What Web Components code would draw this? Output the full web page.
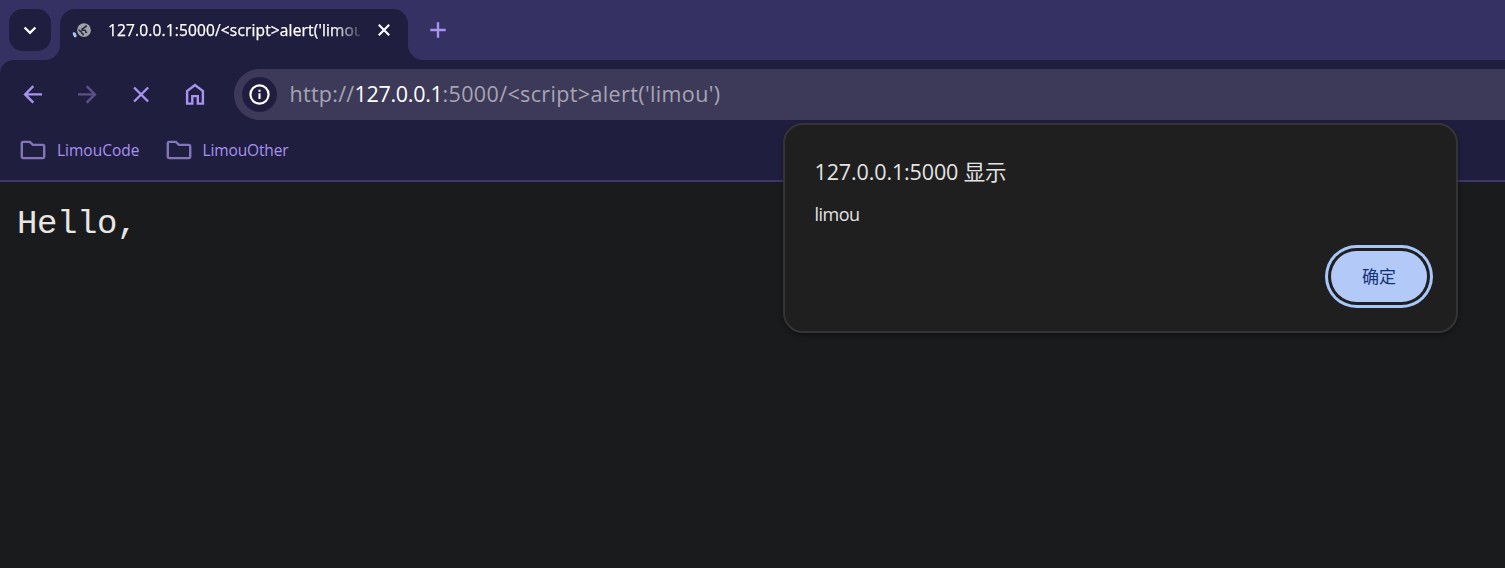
<!DOCTYPE html>
<html lang="zh-CN">
<head>
<meta charset="utf-8">
<title>127.0.0.1:5000</title>
<style>
html,body{margin:0;height:100%;overflow:hidden;background:#1a1b1d}
body{font-family:"Open Sans","Noto Sans CJK SC",sans-serif}
</style>
</head>
<body>
<browser-window>
  <tab-strip slot="tabs"><fit-text w="264">127.0.0.1:5000/&lt;script&gt;alert('limou')</fit-text></tab-strip>
  <nav-bar slot="nav"></nav-bar>
  <bookmarks-bar slot="marks">
    <bookmark-item><fit-text w="82.5">LimouCode</fit-text></bookmark-item>
    <bookmark-item><fit-text w="86">LimouOther</fit-text></bookmark-item>
  </bookmarks-bar>
  <page-view><fit-text w="120">Hello,</fit-text></page-view>
  <alert-dialog slot="dialog">
    <fit-text slot="title" w="192">127.0.0.1:5000 显示</fit-text>
    <fit-text slot="message" w="45">limou</fit-text>
    <fit-text slot="action" w="34">确定</fit-text>
  </alert-dialog>
</browser-window>
<script>
function define(name, html) {
  customElements.define(name, class extends HTMLElement {
    constructor() {
      super();
      this.attachShadow({mode: 'open'}).innerHTML = html;
    }
  });
}

define('browser-window', `<style>
:host{display:flex;flex-direction:column;height:100vh;position:relative;background:#353163;overflow:hidden}
.toolbar{background:#201e3f;border-radius:14px 0 0 0;height:120px;border-bottom:2px solid #3f3867}
</style>
<slot name="tabs"></slot>
<div class="toolbar"><slot name="nav"></slot><slot name="marks"></slot></div>
<slot></slot><slot name="dialog"></slot>`);

define('tab-strip', `<style>
:host{display:flex;height:60px;box-sizing:border-box;padding:9px 0 0 9px;align-items:flex-start;flex:none}
.search{width:42px;height:42px;border-radius:14px;background:#201e3f;display:grid;place-items:center}
.tab{position:relative;margin-left:9px;width:348px;height:51px;box-sizing:border-box;border-radius:15px 15px 0 0;background:#201e3f;display:flex;padding-left:12px}
.tab::before,.tab::after{content:"";position:absolute;bottom:0;width:15px;height:15px}
.tab::before{left:-15px;background:radial-gradient(circle at 0 0,transparent 14.5px,#201e3f 15.3px)}
.tab::after{right:-15px;background:radial-gradient(circle at 100% 0,transparent 14.5px,#201e3f 15.3px)}
.label{margin-left:16px;width:252px;height:42px;overflow:hidden;font-size:15.5px;font-weight:500;line-height:42px;color:#fff;-webkit-text-stroke:.25px #fff;-webkit-mask-image:linear-gradient(90deg,#000 224px,transparent 258px)}
svg{display:block;flex:none}
.fav{margin-top:11px}.close{margin:14px 0 0 17px}
.plus{margin:13px 0 0 22px}
</style>
<div class="search"><svg width="14" height="9" viewBox="0 0 14 9"><path d="M1.6 1.5 7 6.8l5.4-5.3" fill="none" stroke="#fff" stroke-width="2.3"/></svg></div>
<div class="tab">
<svg class="fav" width="20" height="20" viewBox="0 0 20 20"><path d="M2.2 13.7 3.2 15.8" stroke="#a8c7fa" stroke-width="3" stroke-linecap="round" fill="none"/><circle cx="12" cy="10.2" r="6.9" fill="#a0a2ab"/><path d="M14.2 5.2Q14.3 7.1 12.4 7.3 12 8.7 10.3 8.8L10.1 10.2H13Q13.8 10.4 13.8 12.2L15.2 12.4M6.7 9.7 9.4 12.2Q9.7 13.8 11.1 13.9V15.6" fill="none" stroke="#29273f" stroke-width="1.5"/></svg>
<div class="label"><slot></slot></div>
<svg class="close" width="14" height="14" viewBox="0 0 14 14"><path d="m1.8 1.8 10.4 10.4m0-10.4L1.8 12.2" stroke="#fff" stroke-width="2.1"/></svg>
</div>
<svg class="plus" width="16" height="16" viewBox="0 0 16 16"><path d="M8 .3v15.4M.3 8h15.4" stroke="#a793f0" stroke-width="2.4"/></svg>`);

define('nav-bar', `<style>
:host{display:flex;align-items:center;height:51px;padding:9px 0 0 20px;--c:#a793f0}
.btn{width:26px;height:26px;margin:-1px 28px 1px 0;flex:none;fill:none;stroke:var(--c);stroke-width:2.4}
.off{stroke:#5c5089}
.url{margin-left:-2px;flex:1;height:51px;background:#3d3a59;border-radius:26px 0 0 26px;display:flex;align-items:center;font-size:21.5px;color:#a7a5b3;white-space:pre;line-height:51px}
.url fit-text{position:relative;top:-1px}
.info{width:35px;height:35px;border-radius:50%;background:#201e3f;margin:0 12.5px 0 8px;display:grid;place-items:center}
.info svg{display:block}
b{font-weight:400;color:#fff}
</style>
<svg class="btn" viewBox="0 0 26 26"><path d="M22 13.4H5.5M13.3 5.2 5.1 13.4l8.2 8.2"/></svg>
<svg class="btn off" viewBox="0 0 26 26"><path d="M4 13.4h16.5M12.7 5.2l8.2 8.2-8.2 8.2"/></svg>
<svg class="btn" viewBox="0 0 26 26"><path d="m6.1 6.5 14 14m0-14-14 14"/></svg>
<svg class="btn" viewBox="0 0 26 26"><path d="M5.1 22.6V10.1L13 4.1l7.9 6v12.5h-5.1v-7.5h-5.5v7.5Z"/></svg>
<div class="url"><div class="info"><svg width="21" height="21" viewBox="0 0 22 22"><circle cx="11" cy="11" r="9.5" fill="none" stroke="#fff" stroke-width="2.3"/><path d="M11 9.8v6M11 6v2.2" stroke="#fff" stroke-width="2.2"/></svg></div><fit-text w="65">http://</fit-text><b><fit-text w="88">127.0.0.1</fit-text></b><fit-text w="278">:5000/&lt;script&gt;alert('limou')</fit-text></div>`);

define('bookmarks-bar', `<style>:host{display:flex;align-items:center;height:60px;padding-left:20px;gap:26px}</style><slot></slot>`);

define('bookmark-item', `<style>
:host{display:flex;align-items:center;gap:11px;font-size:15.5px;line-height:22px;color:#a793f0}
svg{display:block}
</style><svg width="26" height="20" viewBox="0 0 26 20"><path d="M3.3 1.9h6.6l3 3h9.8q1.5 0 1.5 1.5v10.2q0 1.5-1.5 1.5H3.3q-1.5 0-1.5-1.5V3.4q0-1.5 1.5-1.5Z" fill="none" stroke="#8375b9" stroke-width="2.4"/></svg><slot></slot>`);

define('page-view', `<style>
:host{display:block;flex:1;background:#1a1b1d;padding:23px 0 0 17px;font:34px/38px "Liberation Mono",monospace;color:#e8e6e3}
</style><slot></slot>`);

define('alert-dialog', `<style>
:host{position:absolute;left:783px;top:123px;width:675px;height:210px;box-sizing:border-box;border:2px solid #343437;border-radius:20px;background:#1f1f1f;box-shadow:0 2px 5px #0006;display:flex;flex-direction:column;padding:31px 29px 0 29.5px;color:#e3e3e3}
.t{font-size:21.5px;line-height:32px}
.m{font-size:18px;line-height:26px;margin-top:13px}
button{align-self:flex-end;margin:24px 0 0;width:96px;height:51px;border:0;border-radius:26px;padding:0;background:#b3caf9;color:#143276;font:17px/51px "Open Sans","Noto Sans CJK SC",sans-serif;box-shadow:0 0 0 3px #1f1f1f,0 0 0 6px #a8c7fa}
</style><div class="t"><slot name="title"></slot></div><div class="m"><slot name="message"></slot></div><button><slot name="action"></slot></button>`);

/* Spreads its text over the width given in the "w" attribute by tracking. */
customElements.define('fit-text', class extends HTMLElement {
  constructor() {
    super();
    this.attachShadow({mode: 'open'}).innerHTML =
      '<style>:host{display:inline-block;white-space:pre}</style><slot></slot>';
  }
  connectedCallback() {
    const natural = this.getBoundingClientRect().width;
    this.style.letterSpacing = (this.getAttribute('w') - natural) / this.textContent.length + 'px';
  }
});
</script>
</body>
</html>
